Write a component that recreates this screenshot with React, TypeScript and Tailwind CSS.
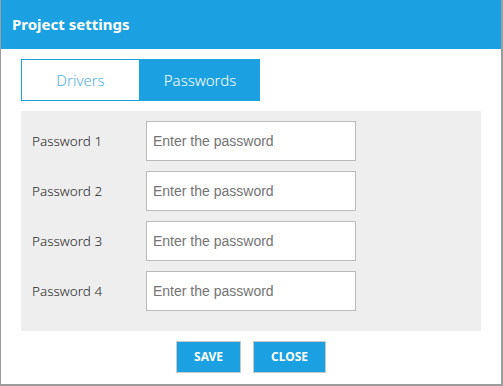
import React from "react";

export default function App() {
  const rows = ["Password 1", "Password 2", "Password 3", "Password 4"];
  return (
    <div className="w-[503px] h-[386px] bg-white border-l border-r-2 border-b-2 border-[#9c9c9c] flex flex-col" style={{ fontFamily: '"Noto Sans", "Open Sans", sans-serif' }}>
      <div className="h-[49px] bg-[#1ba1e2] flex items-center pl-[11px] shrink-0">
        <span className="text-white font-bold text-[15px] leading-none">Project settings</span>
      </div>
      <div className="flex flex-col px-5 pt-[10px]">
        <div className="flex h-[42px]">
          <div className="w-[119px] border border-[#1ba1e2] bg-white flex items-center justify-center text-[15px] font-light text-[#4fb0e6]">
            Drivers
          </div>
          <div className="w-[120px] bg-[#1ba1e2] flex items-center justify-center text-[15px] font-light text-white">
            Passwords
          </div>
        </div>
        <div className="mt-[10px] bg-[#eeeeee] w-[460px] pt-[10px] pb-5 pl-[10px] flex flex-col gap-[10px]">
          {rows.map((r) => (
            <div key={r} className="flex items-center h-[40px]">
              <div className="w-[115px] pl-px text-[13.5px] font-light text-[#1f1f1f]">{r}</div>
              <input
                type="password"
                placeholder="Enter the password"
                className="w-[210px] h-[40px] bg-white border border-[#bbbbbb] px-[6px] text-[14px] outline-none placeholder:text-[#737373]"
                style={{ fontFamily: '"Liberation Sans", Arial, sans-serif' }}
              />
            </div>
          ))}
        </div>
        <div className="flex justify-center gap-3 mt-[10px]">
          <button className="w-[65px] h-[32px] bg-[#1ba1e2] border border-[#c8c8c8] text-white text-[12px] font-bold">SAVE</button>
          <button className="w-[73px] h-[32px] bg-[#1ba1e2] border border-[#c8c8c8] text-white text-[12px] font-bold">CLOSE</button>
        </div>
      </div>
    </div>
  );
}
